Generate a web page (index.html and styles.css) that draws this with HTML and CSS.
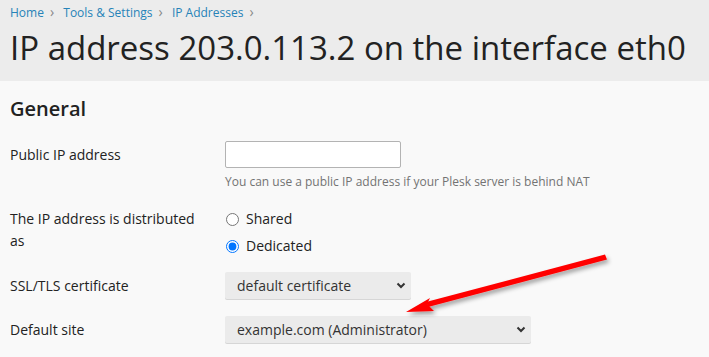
FILE: index.html
```html
<!DOCTYPE html>
<html lang="en">
<head>
    <meta charset="UTF-8">
    <meta name="viewport" content="width=device-width, initial-scale=1.0">
    <title>IP address 203.0.113.2 - Plesk</title>
    <link rel="stylesheet" href="styles.css">
</head>
<body>
    <div class="page-header">
        <div class="breadcrumbs">
            <a href="#">Home</a><span class="sep">&rsaquo;</span>
            <a href="#">Tools &amp; Settings</a><span class="sep">&rsaquo;</span>
            <a href="#">IP Addresses</a><span class="sep">&rsaquo;</span>
        </div>
        <h1>IP address 203.0.113.2 on the interface eth0</h1>
    </div>

    <div class="content">
        <h2>General</h2>

        <div class="form-row row-ip">
            <label class="field-label" for="publicIp">Public IP address</label>
            <div class="field">
                <input type="text" id="publicIp" class="text-input">
                <div class="hint">You can use a public IP address if your Plesk server is behind NAT</div>
            </div>
        </div>

        <div class="form-row row-radio">
            <div class="field-label">The IP address is distributed as</div>
            <div class="field radios">
                <label class="radio"><input type="radio" name="dist"> Shared</label>
                <label class="radio"><input type="radio" name="dist" checked> Dedicated</label>
            </div>
        </div>

        <div class="form-row row-select">
            <label class="field-label" for="cert">SSL/TLS certificate</label>
            <div class="field">
                <span class="select-wrap cert">
                    <select id="cert"><option>default certificate</option></select>
                    <svg class="chevron" width="10" height="7" viewBox="0 0 10 7"><path d="M1.5 1.5 L5 5 L8.5 1.5" fill="none" stroke="#333" stroke-width="2"/></svg>
                </span>
            </div>
        </div>

        <div class="form-row row-select">
            <label class="field-label" for="site">Default site</label>
            <div class="field">
                <span class="select-wrap site">
                    <select id="site"><option>example.com (Administrator)</option></select>
                    <svg class="chevron" width="10" height="7" viewBox="0 0 10 7"><path d="M1.5 1.5 L5 5 L8.5 1.5" fill="none" stroke="#333" stroke-width="2"/></svg>
                </span>
            </div>
        </div>
    </div>

    <!-- annotation arrow -->
    <svg class="arrow" width="709" height="357" viewBox="0 0 709 357">
        <defs>
            <filter id="shadow" x="-10%" y="-30%" width="130%" height="180%">
                <feDropShadow dx="2" dy="3" stdDeviation="2" flood-color="#000" flood-opacity="0.35"/>
            </filter>
        </defs>
        <g filter="url(#shadow)" fill="#f00">
            <path d="M605 254.5 L607 259.5 L428 307 L426 302 Z"/>
            <path d="M406 312 L430 298 L427 304 L434 311 Z"/>
        </g>
    </svg>
</body>
</html>
```

FILE: styles.css
```css
body {
    margin: 0;
    font-family: "Open Sans", "DejaVu Sans", sans-serif;
    background: #f9f9f9;
    color: #222;
    width: 709px;
    height: 357px;
    overflow: hidden;
    position: relative;
}
.page-header {
    background: #ececec;
    padding: 3px 10px 0;
    height: 81px;
    box-sizing: border-box;
}
.breadcrumbs {
    font-size: 12px;
    line-height: 18px;
}
.breadcrumbs a {
    color: #2683b8;
    text-decoration: none;
}
.breadcrumbs .sep {
    color: #888;
    margin: 0 6px;
    font-size: 14px;
}
h1 {
    margin: 4px 0 0;
    font-size: 33px;
    font-weight: 400;
    line-height: 44px;
    color: #222;
}
.content {
    padding: 14px 10px 0;
}
h2 {
    margin: 0 0 18px;
    font-size: 20px;
    font-weight: 600;
    line-height: 28px;
    color: #222;
}
.form-row {
    display: flex;
    font-size: 14px;
}
.field-label {
    width: 200px;
    margin-right: 15px;
    line-height: 22px;
    color: #222;
}
.row-ip .field-label {
    padding-top: 3px;
}
.row-ip {
    margin-bottom: 18px;
}
.text-input {
    width: 176px;
    height: 27px;
    box-sizing: border-box;
    border: 1px solid #b3b3b3;
    border-radius: 2px;
    background: #fff;
    margin: 0;
    display: block;
}
.hint {
    font-size: 12px;
    color: #737373;
    margin-top: 5px;
    line-height: 17px;
}
.radios {
    display: flex;
    flex-direction: column;
    gap: 5px;
}
.radio {
    display: flex;
    align-items: center;
    line-height: 22px;
    color: #222;
}
.radio input {
    margin: 0 7px 0 1px;
    width: 13px;
    height: 13px;
}
.row-radio {
    margin-bottom: 15px;
}
.row-select {
    margin-bottom: 17px;
}
.row-select .field-label {
    line-height: 27px;
}
.select-wrap {
    position: relative;
    display: inline-block;
}
.select-wrap select {
    appearance: none;
    -webkit-appearance: none;
    height: 27px;
    border: none;
    border-radius: 2px;
    background: #ebebeb;
    box-shadow: 0 1px 0 #d6d6d6;
    font-family: "Open Sans", "DejaVu Sans", sans-serif;
    font-size: 14px;
    color: #333;
    padding: 0 12px;
    margin: 0;
    display: block;
}
.select-wrap.cert select {
    width: 186px;
}
.select-wrap.site select {
    width: 306px;
}
.chevron {
    position: absolute;
    right: 5px;
    top: 10px;
    pointer-events: none;
}
.arrow {
    position: absolute;
    left: 0;
    top: 0;
    pointer-events: none;
}
```
